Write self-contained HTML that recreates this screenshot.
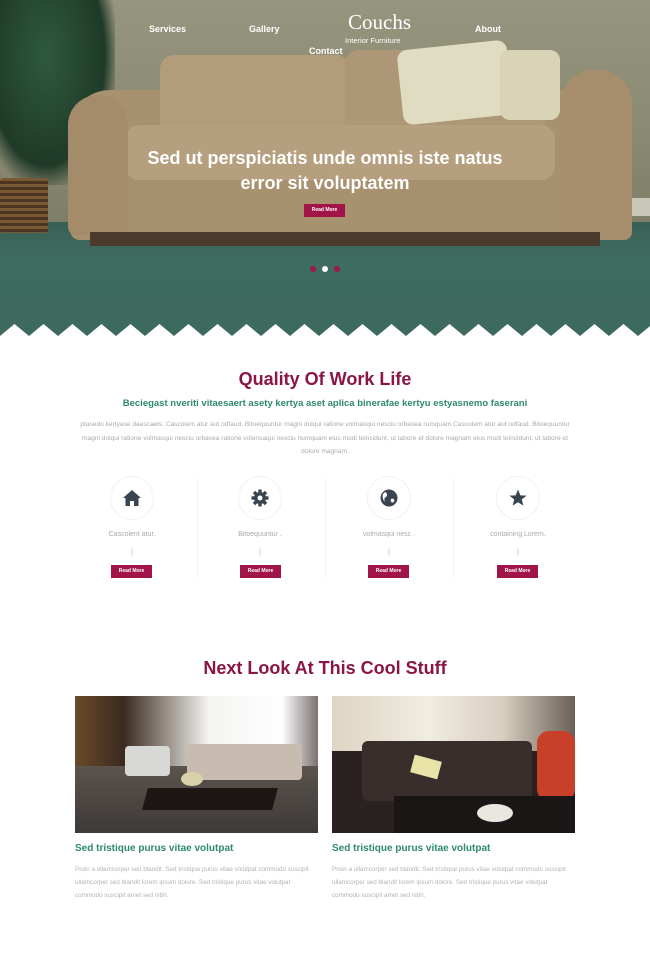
<!DOCTYPE html>
<html><head><meta charset="utf-8"><style>
*{margin:0;padding:0;box-sizing:border-box}
body{width:650px;height:960px;background:#fff;font-family:"Liberation Sans",sans-serif;position:relative;overflow:hidden}
.a{position:absolute}
.hero{left:0;top:0;width:650px;height:340px;overflow:hidden;background:linear-gradient(180deg,#96957e 0%,#8a8972 40%,#7d7c66 68%,#5f6453 70%)}
.nav{color:#fff;font-size:9px;font-weight:bold}
.btn{background:#a0144a;color:#fff;font-size:5px;font-weight:bold;text-align:center;line-height:13px;width:41px;height:13px}
.h2{width:650px;text-align:center;color:#8a1546;font-size:18px;font-weight:bold;left:0}
.p{color:#aaa;font-size:6.6px;line-height:13.5px;text-align:center}
.ic{width:44px;height:44px;border-radius:50%;border:1px solid #f0f0f0;display:flex;align-items:center;justify-content:center}
.lab{color:#aaa;font-size:7px;width:100px;text-align:center}
.sep{width:1px;background:#f0f0f0;top:478px;height:100px}
.cap{color:#2e8a6c;font-size:10px;font-weight:bold}
.txt{color:#b3b3b3;font-size:6.3px;line-height:13px;width:244px}
</style></head><body>
<div class="a hero">
  <div class="a" style="left:0;top:222px;width:650px;height:118px;background:linear-gradient(180deg,#3a5f55,#3f6c61 30%,#3d695e)"></div>
  <div class="a" style="left:600px;top:198px;width:50px;height:18px;background:#c9c7b8"></div>
  <div class="a" style="left:0;top:0;width:115px;height:185px;background:radial-gradient(ellipse at 40% 30%,#2f5a3e,#1f3a28 60%,rgba(30,50,35,0) 75%)"></div>
  <div class="a" style="left:0;top:178px;width:48px;height:55px;background:repeating-linear-gradient(180deg,#7a5a35 0 3px,#4b3520 3px 6px);border-radius:3px"></div>
  <div class="a" style="left:70px;top:90px;width:560px;height:150px;background:#a8916f;border-radius:40px 40px 10px 10px"></div>
  <div class="a" style="left:160px;top:55px;width:190px;height:100px;background:#b29c7a;border-radius:14px"></div>
  <div class="a" style="left:345px;top:50px;width:200px;height:100px;background:#ad9776;border-radius:14px"></div>
  <div class="a" style="left:400px;top:45px;width:110px;height:75px;background:#e0dcc2;border-radius:10px;transform:rotate(-6deg)"></div>
  <div class="a" style="left:500px;top:50px;width:60px;height:70px;background:#d9d4b8;border-radius:10px"></div>
  <div class="a" style="left:125px;top:125px;width:430px;height:55px;background:#b59f7e;border-radius:14px"></div>
  <div class="a" style="left:68px;top:95px;width:60px;height:140px;background:#a48c6a;border-radius:30px 30px 8px 8px"></div>
  <div class="a" style="left:560px;top:70px;width:72px;height:170px;background:#a68e6c;border-radius:34px 34px 8px 8px"></div>
  <div class="a" style="left:90px;top:232px;width:510px;height:14px;background:#4a3a2c"></div>
  <div class="a nav" style="left:149px;top:24px">Services</div>
  <div class="a nav" style="left:249px;top:24px">Gallery</div>
  <div class="a nav" style="left:309px;top:46px">Contact</div>
  <div class="a nav" style="left:475px;top:24px">About</div>
  <div class="a" style="left:348px;top:10px;color:#fff;font-family:'Liberation Serif',serif;font-size:21px">Couchs</div>
  <div class="a" style="left:345px;top:36px;color:#fff;font-size:7.5px">Interior Furniture</div>
  <div class="a" style="left:0;width:650px;top:146px;text-align:center;color:#fff;font-size:18px;font-weight:bold;line-height:25px">Sed ut perspiciatis unde omnis iste natus<br>error sit voluptatem</div>
  <div class="a btn" style="left:304px;top:204px;height:13px">Read More</div>
  <div class="a" style="left:310px;top:266px;width:6px;height:6px;border-radius:50%;background:#a0144a"></div>
  <div class="a" style="left:322px;top:266px;width:6px;height:6px;border-radius:50%;background:#fff"></div>
  <div class="a" style="left:334px;top:266px;width:6px;height:6px;border-radius:50%;background:#a0144a"></div>
  <svg class="a" style="left:0;top:322px" width="650" height="18" viewBox="0 0 650 18">
    <path fill="#fff" d="M0 14 L0 18 L650 18 L650 14 Z"/>
    <path fill="#fff" d="M0 14 L14.5 2 L29 14 L43.5 2 L58 14 L72.5 2 L87 14 L101.5 2 L116 14 L130.5 2 L145 14 L159.5 2 L174 14 L188.5 2 L203 14 L217.5 2 L232 14 L246.5 2 L261 14 L275.5 2 L290 14 L304.5 2 L319 14 L333.5 2 L348 14 L362.5 2 L377 14 L391.5 2 L406 14 L420.5 2 L435 14 L449.5 2 L464 14 L478.5 2 L493 14 L507.5 2 L522 14 L536.5 2 L551 14 L565.5 2 L580 14 L594.5 2 L609 14 L623.5 2 L638 14 L652.5 2 L652 14 Z"/>
  </svg>
</div>

<div class="a h2" style="top:369px">Quality Of Work Life</div>
<div class="a" style="left:0;width:650px;top:398px;text-align:center;color:#2e8a6c;font-size:9.5px;font-weight:bold">Beciegast nveriti vitaesaert asety kertya aset aplica binerafae kertyu estyasnemo faserani</div>
<div class="a p" style="left:75px;width:500px;top:418px">ptasedo kertyase daescaels. Cascolem atur aut odfaud. Bitoequuntur magni dolqui ratione volmasqui nesciu orbasea rumquam Cascolem atur aut odfaud. Bitoequuntur magni dolqui ratione volmasqui nesciu orbasea ratione volensaqui nesciu numquam eius modi teincidunt, ut labore et dolore magnam eius modi teincidunt, ut labore et dolore magnam.</div>

<div class="a sep" style="left:197px"></div>
<div class="a sep" style="left:325px"></div>
<div class="a sep" style="left:453px"></div>

<div class="a ic" style="left:110px;top:476px"><svg width="20" height="20" viewBox="0 0 20 20"><path fill="#3b4550" d="M10 2 L1 10 L3.5 10 L3.5 18 L8 18 L8 13 L12 13 L12 18 L16.5 18 L16.5 10 L19 10 Z"/></svg></div>
<div class="a ic" style="left:238px;top:476px"><svg width="20" height="20" viewBox="0 0 20 20"><g fill="#3b4550"><circle cx="10" cy="10" r="6"/><rect x="8.3" y="1.5" width="3.4" height="17"/><rect x="1.5" y="8.3" width="17" height="3.4"/><rect x="8.3" y="1.5" width="3.4" height="17" transform="rotate(45 10 10)"/><rect x="8.3" y="1.5" width="3.4" height="17" transform="rotate(-45 10 10)"/></g><circle cx="10" cy="10" r="2.5" fill="#fff"/></svg></div>
<div class="a ic" style="left:367px;top:476px"><svg width="20" height="20" viewBox="0 0 20 20"><circle cx="10" cy="10" r="8.5" fill="#3b4550"/><path fill="#fff" d="M6 4 C8 5 9 7 7 9 C5 10 5 12 6 14 C4 12 3 9 4 6 Z M12 11 C14 10 16 11 15 14 C13 15 11 14 12 11 Z"/></svg></div>
<div class="a ic" style="left:496px;top:476px"><svg width="20" height="20" viewBox="0 0 20 20"><path fill="#3b4550" d="M10 1.5 L12.4 7.4 L18.6 7.6 L13.8 11.5 L15.4 17.6 L10 14.2 L4.6 17.6 L6.2 11.5 L1.4 7.6 L7.6 7.4 Z"/></svg></div>

<div class="a lab" style="left:82px;top:531px">Cascolent atur.</div>
<div class="a lab" style="left:210px;top:531px">Bitoequuntur .</div>
<div class="a lab" style="left:339px;top:531px">volmasqui nesc .</div>
<div class="a lab" style="left:468px;top:531px">containing Lorem.</div>
<div class="a lab" style="left:82px;top:549px">|</div>
<div class="a lab" style="left:210px;top:549px">|</div>
<div class="a lab" style="left:339px;top:549px">|</div>
<div class="a lab" style="left:468px;top:549px">|</div>
<div class="a btn" style="left:111px;top:565px">Read More</div>
<div class="a btn" style="left:240px;top:565px">Read More</div>
<div class="a btn" style="left:368px;top:565px">Read More</div>
<div class="a btn" style="left:497px;top:565px">Read More</div>

<div class="a h2" style="top:658px">Next Look At This Cool Stuff</div>

<div class="a" style="left:75px;top:696px;width:243px;height:137px;overflow:hidden;background:#4a4240">
  <div class="a" style="left:0;top:0;width:243px;height:70px;background:linear-gradient(90deg,#6b4a2a 0,#3a2a20 20%,#8a8078 35%,#f4f4f2 55%,#fff 85%,#7a7270 100%)"></div>
  <div class="a" style="left:0;top:70px;width:243px;height:67px;background:linear-gradient(180deg,#5b544e,#3e3a38)"></div>
  <div class="a" style="left:112px;top:48px;width:115px;height:36px;background:#c8bcb0;border-radius:4px"></div>
  <div class="a" style="left:50px;top:50px;width:45px;height:30px;background:#d8d8d6;border-radius:4px"></div>
  <div class="a" style="left:70px;top:92px;width:130px;height:22px;background:#1c1614;transform:skewX(-15deg)"></div>
  <div class="a" style="left:106px;top:76px;width:22px;height:14px;background:#d8d0a8;border-radius:50%"></div>
</div>
<div class="a" style="left:332px;top:696px;width:243px;height:137px;overflow:hidden;background:#2a2220">
  <div class="a" style="left:0;top:0;width:243px;height:55px;background:linear-gradient(90deg,#ded6c4,#f0ece0 40%,#d8cfc0 70%,#6a6058)"></div>
  <div class="a" style="left:30px;top:45px;width:170px;height:60px;background:#3a2e2c;border-radius:6px"></div>
  <div class="a" style="left:80px;top:62px;width:28px;height:18px;background:#e8e4a8;transform:rotate(15deg)"></div>
  <div class="a" style="left:205px;top:35px;width:38px;height:70px;background:#c8402a;border-radius:12px"></div>
  <div class="a" style="left:62px;top:100px;width:181px;height:37px;background:#1a1616"></div>
  <div class="a" style="left:145px;top:108px;width:36px;height:18px;background:#e8e8e0;border-radius:50%"></div>
</div>

<div class="a cap" style="left:75px;top:843px">Sed tristique purus vitae volutpat</div>
<div class="a cap" style="left:332px;top:843px">Sed tristique purus vitae volutpat</div>
<div class="a txt" style="left:75px;top:863px">Proin a ullamcorper sed blandit. Sed tristique purus vitae volutpat commodo suscipit ullamcorper sed blandit lorem ipsum dolore. Sed tristique purus vitae volutpat commodo suscipit amet sed nibh.</div>
<div class="a txt" style="left:332px;top:863px">Proin a ullamcorper sed blandit. Sed tristique purus vitae volutpat commodo suscipit ullamcorper sed blandit lorem ipsum dolore. Sed tristique purus vitae volutpat commodo suscipit amet sed nibh.</div>
</body></html>
